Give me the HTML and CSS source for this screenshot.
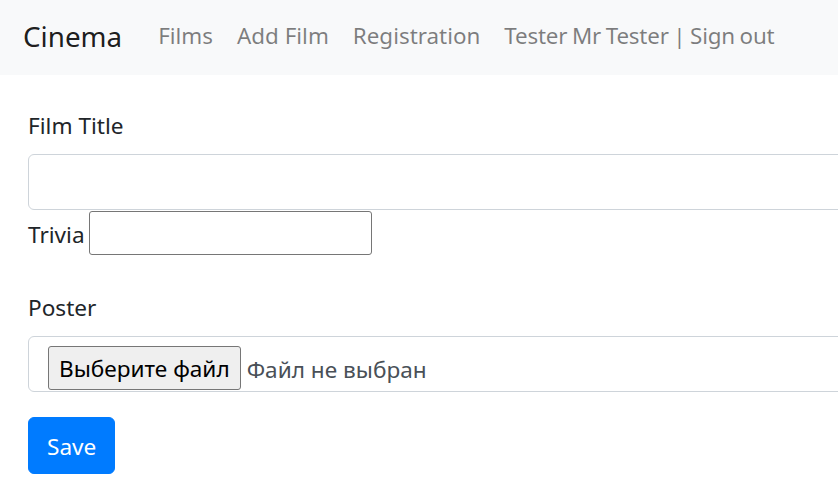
FILE: index.html
```html
<!DOCTYPE html>
<html lang="en">
<head>
<meta charset="utf-8">
<title>Cinema</title>
<link rel="stylesheet" href="styles.css">
</head>
<body>
<nav class="navbar">
  <a class="brand" href="#">Cinema</a>
  <ul class="nav">
    <li><a class="nav-link" href="#">Films</a></li>
    <li><a class="nav-link" href="#">Add Film</a></li>
    <li><a class="nav-link" href="#">Registration</a></li>
    <li><a class="nav-link user-link" href="#">Tester Mr Tester | Sign out</a></li>
  </ul>
</nav>
<main class="container">
  <form class="form">
    <div class="group-title">
      <label class="label" for="title">Film Title</label>
      <input class="form-control" id="title" type="text">
    </div>
    <div class="trivia-row">
      <label class="inline-label" for="trivia">Trivia</label>
      <input class="plain-input" id="trivia" type="text">
    </div>
    <div class="group">
      <label class="label" for="poster">Poster</label>
      <div class="form-control file-control">
        <span class="file-btn">Выберите файл</span>
        <span class="file-text">Файл не выбран</span>
      </div>
    </div>
    <button class="btn-primary" type="button">Save</button>
  </form>
</main>
</body>
</html>
```

FILE: styles.css
```css
html, body {
  margin: 0;
  padding: 0;
  overflow: hidden;
}
body {
  font-family: "Noto Sans", "Open Sans", sans-serif;
  font-size: 22.6px;
  line-height: 36px;
  color: #212529;
  background: #fff;
  width: 838px;
  height: 501px;
}
.navbar {
  display: flex;
  align-items: center;
  height: 75px;
  box-sizing: border-box;
  padding: 0 24px 3px 23px;
  background: #f8f9fa;
  white-space: nowrap;
}
.brand {
  font-size: 27.8px;
  line-height: 45px;
  color: rgba(0, 0, 0, 0.9);
  text-decoration: none;
  margin-right: 24px;
  flex-shrink: 0;
}
.nav {
  display: flex;
  list-style: none;
  margin: 0;
  padding: 0;
  flex-shrink: 0;
}
.nav-link {
  display: block;
  padding: 0 12px;
  font-size: 22.4px;
  color: rgba(0, 0, 0, 0.5);
  text-decoration: none;
}
.user-link {
  letter-spacing: -0.2px;
  word-spacing: -1px;
}
.container {
  padding: 31px 0 0 28px;
}
.form {
  width: 900px;
}
.label {
  display: block;
  padding-top: 2px;
  margin-bottom: 10px;
}
.form-control {
  display: block;
  box-sizing: border-box;
  width: 100%;
  height: 56px;
  border: 1px solid #ced4da;
  border-radius: 6px;
  background: #fff;
  font: inherit;
  color: #495057;
  padding: 9px 18px;
}
.trivia-row {
  display: flex;
  align-items: center;
  gap: 4px;
  margin-top: 1px;
}
.inline-label {
  padding-top: 4px;
}
.plain-input {
  box-sizing: border-box;
  width: 283px;
  height: 44px;
  border: 1px solid #767676;
  border-radius: 3px;
  background: #fff;
  font: inherit;
  padding: 1px 3px;
}
.group {
  margin-top: 33px;
  margin-bottom: 25px;
}
.file-control {
  display: flex;
  align-items: center;
  gap: 6px;
  padding: 0 19px;
}
.file-btn {
  box-sizing: border-box;
  height: 44px;
  line-height: 44px;
  padding: 0 10px;
  border: 1px solid #767676;
  border-radius: 3px;
  background: #efefef;
  color: #000;
  margin-top: 8px;
}
.file-text {
  color: #495057;
  margin-top: 12px;
}
.btn-primary {
  display: block;
  box-sizing: border-box;
  height: 57px;
  padding: 2px 18px 0;
  border: 1px solid #007bff;
  border-radius: 6px;
  background: #007bff;
  color: #fff;
  font: inherit;
}
```
